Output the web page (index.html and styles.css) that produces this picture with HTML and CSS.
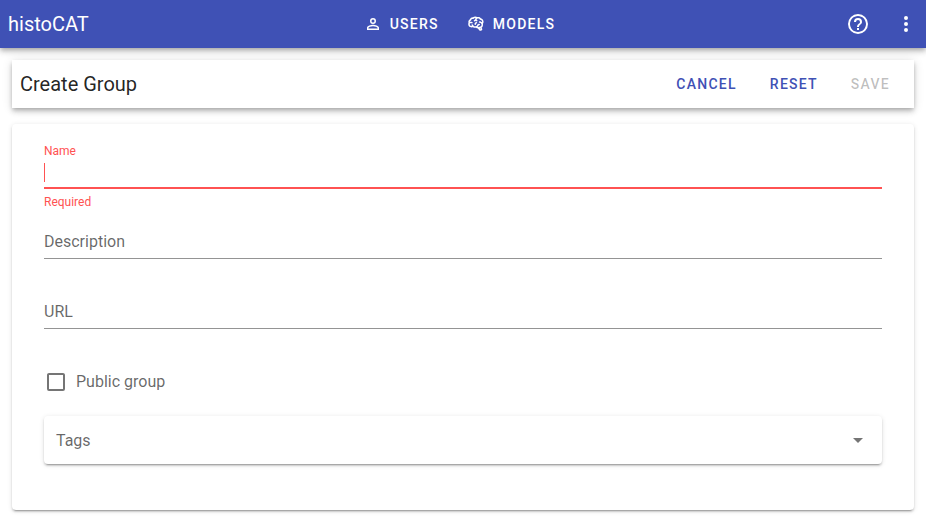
FILE: index.html
```html
<!DOCTYPE html>
<html lang="en">
<head>
<meta charset="utf-8">
<title>histoCAT</title>
<link rel="stylesheet" href="styles.css">
</head>
<body>
<header class="app-bar">
  <div class="brand">histoCAT</div>
  <nav class="nav">
    <a class="btn"><svg class="icon-small" viewBox="0 0 24 24"><path d="M12,4A4,4 0 0,1 16,8A4,4 0 0,1 12,12A4,4 0 0,1 8,8A4,4 0 0,1 12,4M12,6A2,2 0 0,0 10,8A2,2 0 0,0 12,10A2,2 0 0,0 14,8A2,2 0 0,0 12,6M12,13C14.67,13 20,14.33 20,17V20H4V17C4,14.33 9.33,13 12,13M12,14.9C9.03,14.9 5.9,16.36 5.9,17V18.1H18.1V17C18.1,16.36 14.97,14.9 12,14.9Z"/></svg>USERS</a>
    <a class="btn"><svg class="icon-small" viewBox="0 0 24 24"><path d="M21.33,12.91C21.42,14.46 20.71,15.95 19.44,16.86L20.21,18.35C20.44,18.8 20.47,19.33 20.27,19.8C20.08,20.27 19.69,20.64 19.21,20.8L18.42,21.05C18.25,21.11 18.06,21.14 17.88,21.14C17.37,21.14 16.89,20.91 16.56,20.5L14.44,18C13.55,17.85 12.71,17.47 12,16.9C11.5,17.05 11,17.13 10.5,17.13C9.62,17.13 8.74,16.86 8,16.34C7.47,16.5 6.93,16.57 6.38,16.56C5.59,16.57 4.81,16.41 4.08,16.11C2.65,15.47 1.7,14.07 1.65,12.5C1.57,11.78 1.69,11.05 2,10.39C1.71,9.64 1.68,8.82 1.93,8.06C2.3,7.11 3,6.32 3.87,5.82C4.45,4.13 6.08,3 7.87,3.12C9.47,1.62 11.92,1.46 13.7,2.75C14.12,2.64 14.56,2.58 15,2.58C16.36,2.55 17.65,3.15 18.5,4.22C20.54,4.75 22,6.57 22.08,8.69C22.13,9.8 21.83,10.89 21.22,11.82C21.29,12.18 21.33,12.54 21.33,12.91M16.33,11.5C16.9,11.57 17.35,12 17.35,12.57A1,1 0 0,1 16.35,13.57H15.72C15.4,14.47 14.84,15.26 14.1,15.86C14.35,15.95 14.61,16 14.87,16.07C20,16 19.4,12.87 19.4,12.82C19.34,11.39 18.14,10.27 16.71,10.33A1,1 0 0,1 15.71,9.33A1,1 0 0,1 16.71,8.33C17.94,8.36 19.12,8.82 20.04,9.63C20.09,9.34 20.12,9.04 20.12,8.74C20.06,7.5 19.5,6.42 17.25,6.21C16,3.25 12.85,4.89 12.85,5.81V5.81C12.82,6.04 13.06,6.53 13.1,6.56A1,1 0 0,1 14.1,7.56C14.1,8.11 13.65,8.56 13.1,8.56V8.56C12.57,8.54 12.07,8.34 11.67,8C11.19,8.31 10.64,8.5 10.07,8.56V8.56C9.5,8.61 9.03,8.21 9,7.66C8.92,7.1 9.33,6.61 9.88,6.56C10.04,6.54 10.82,6.42 10.82,5.79V5.79C10.82,5.13 11.07,4.5 11.5,4C10.58,3.75 9.59,4.08 8.59,5.29C6.75,5 6,5.25 5.45,7.2C4.5,7.67 4,8 3.78,9C4.86,8.78 5.97,8.87 7,9.25C7.5,9.44 7.78,10 7.59,10.54C7.4,11.06 6.82,11.32 6.3,11.13C5.57,10.81 4.75,10.79 4,11.07C3.68,11.34 3.68,11.9 3.68,12.34C3.68,13.08 4.05,13.77 4.68,14.17C5.21,14.44 5.8,14.58 6.39,14.57C6.24,14.31 6.11,14.04 6,13.76C5.81,13.22 6.1,12.63 6.64,12.44C7.18,12.25 7.77,12.54 7.96,13.08C8.36,14.22 9.38,15 10.58,15.13C11.95,15.06 13.17,14.25 13.77,13C14,11.62 15.11,11.5 16.33,11.5M18.33,18.97L17.71,17.67L17,17.83L18,19.08L18.33,18.97M13.68,10.36C13.7,9.83 13.3,9.38 12.77,9.33C12.06,9.29 11.37,9.53 10.84,10C10.27,10.58 9.97,11.38 10,12.19A1,1 0 0,0 11,13.19C11.57,13.19 12,12.74 12,12.19C12,11.92 12.07,11.65 12.23,11.43C12.35,11.33 12.5,11.28 12.66,11.28C13.21,11.31 13.68,10.9 13.68,10.36Z"/></svg>MODELS</a>
  </nav>
  <div class="actions">
    <svg class="icon" viewBox="0 0 24 24"><path d="M11,18H13V16H11V18M12,2A10,10 0 0,0 2,12A10,10 0 0,0 12,22A10,10 0 0,0 22,12A10,10 0 0,0 12,2M12,20C7.59,20 4,16.41 4,12C4,7.59 7.59,4 12,4C16.41,4 20,7.59 20,12C20,16.41 16.41,20 12,20M12,6A4,4 0 0,0 8,10H10A2,2 0 0,1 12,8A2,2 0 0,1 14,10C14,12 11,11.75 11,15H13C13,12.75 16,12.5 16,10A4,4 0 0,0 12,6Z"/></svg>
    <svg class="icon" viewBox="0 0 24 24"><path d="M12,16A2,2 0 0,1 14,18A2,2 0 0,1 12,20A2,2 0 0,1 10,18A2,2 0 0,1 12,16M12,10A2,2 0 0,1 14,12A2,2 0 0,1 12,14A2,2 0 0,1 10,12A2,2 0 0,1 12,10M12,4A2,2 0 0,1 14,6A2,2 0 0,1 12,8A2,2 0 0,1 10,6A2,2 0 0,1 12,4Z"/></svg>
  </div>
</header>
<main class="content">
  <div class="toolbar">
    <h1 class="title">Create Group</h1>
    <div class="toolbar-buttons">
      <a class="btn primary">CANCEL</a>
      <a class="btn primary">RESET</a>
      <a class="btn disabled">SAVE</a>
    </div>
  </div>
  <form class="card">
    <div class="field error">
      <div class="label-small">Name</div>
      <div class="entry"><span class="caret"></span></div>
      <div class="message">Required</div>
    </div>
    <div class="field">
      <div class="line">Description</div>
    </div>
    <div class="field">
      <div class="line">URL</div>
    </div>
    <div class="check">
      <svg class="icon muted" viewBox="0 0 24 24"><path d="M19,3H5C3.89,3 3,3.89 3,5V19A2,2 0 0,0 5,21H19A2,2 0 0,0 21,19V5C21,3.89 20.1,3 19,3M19,5V19H5V5H19Z"/></svg>
      <span>Public group</span>
    </div>
    <div class="select">
      <span class="select-label">Tags</span>
      <svg class="icon muted" viewBox="0 0 24 24"><path d="M7,10L12,15L17,10H7Z"/></svg>
    </div>
  </form>
</main>
</body>
</html>
```

FILE: styles.css
```css
* {
  box-sizing: border-box;
}

body {
  margin: 0;
  height: 521px;
  overflow: hidden;
  background: #fff;
  color: rgba(0, 0, 0, 0.87);
  font: 16px/24px Roboto, sans-serif;
}

svg {
  display: block;
  flex: none;
  fill: currentColor;
}

.icon {
  width: 24px;
  height: 24px;
}

.icon-small {
  width: 18px;
  height: 18px;
  margin-right: 8px;
}

.muted {
  color: rgba(0, 0, 0, 0.54);
}

.app-bar {
  display: grid;
  grid-template-columns: 1fr auto 1fr;
  align-items: center;
  height: 48px;
  padding: 0 8px;
  background: #3f51b5;
  color: #fff;
  box-shadow: 0 2px 4px -1px rgba(0, 0, 0, 0.2), 0 4px 5px 0 rgba(0, 0, 0, 0.14), 0 1px 10px 0 rgba(0, 0, 0, 0.12);
}

.brand,
.title {
  margin: 0;
  font-size: 20px;
  font-weight: 400;
  line-height: 30px;
}

.nav {
  display: flex;
  gap: 4px;
  margin-right: 7px;
}

.btn {
  display: flex;
  align-items: center;
  height: 48px;
  padding: 0 12px;
  font-size: 14px;
  font-weight: 500;
  letter-spacing: 1.25px;
}

.actions {
  display: flex;
  justify-content: flex-end;
  gap: 24px;
}

.content {
  padding: 12px;
}

.toolbar {
  display: flex;
  align-items: center;
  justify-content: space-between;
  height: 48px;
  padding: 0 8px;
  background: #fff;
  box-shadow: 0 2px 4px -1px rgba(0, 0, 0, 0.2), 0 4px 5px 0 rgba(0, 0, 0, 0.14), 0 1px 10px 0 rgba(0, 0, 0, 0.12);
}

.toolbar-buttons {
  display: flex;
  gap: 1px;
}

.toolbar-buttons .btn {
  padding: 0 16px;
}

.primary {
  color: #3f51b5;
}

.disabled {
  color: rgba(0, 0, 0, 0.26);
}

.card {
  height: 386px;
  margin-top: 16px;
  padding: 16px 32px;
  border-radius: 4px;
  background: #fff;
  box-shadow: 0 3px 1px -2px rgba(0, 0, 0, 0.2), 0 2px 2px 0 rgba(0, 0, 0, 0.14), 0 1px 5px 0 rgba(0, 0, 0, 0.12);
}

.field {
  height: 70px;
  padding-top: 12px;
  color: rgba(0, 0, 0, 0.6);
}

.field.error {
  padding-top: 1px;
  color: #ff5252;
}

.label-small {
  height: 20px;
  font-size: 12px;
  line-height: 20px;
}

.entry {
  height: 28px;
  padding-top: 2px;
  border-bottom: 2px solid #ff5252;
}

.caret {
  display: block;
  width: 1px;
  height: 19px;
  background: #ff5252;
}

.message {
  padding-top: 7px;
  font-size: 12px;
  line-height: 12px;
}

.line {
  height: 37px;
  padding-top: 8px;
  border-bottom: 1px solid rgba(0, 0, 0, 0.42);
}

.check {
  display: flex;
  align-items: center;
  gap: 8px;
  height: 24px;
  margin-top: 20px;
  color: rgba(0, 0, 0, 0.6);
}

.select {
  display: flex;
  align-items: center;
  justify-content: space-between;
  height: 48px;
  margin-top: 22px;
  padding: 0 12px;
  border-radius: 4px;
  background: #fff;
  color: rgba(0, 0, 0, 0.6);
  box-shadow: 0 3px 1px -2px rgba(0, 0, 0, 0.2), 0 2px 2px 0 rgba(0, 0, 0, 0.14), 0 1px 5px 0 rgba(0, 0, 0, 0.12);
}

.select-label {
  padding-top: 2px;
}
```
